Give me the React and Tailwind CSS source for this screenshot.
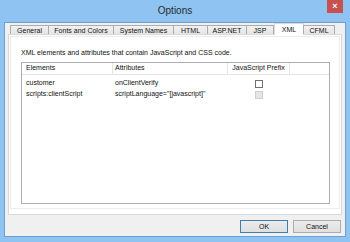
import React from 'react'

const tabs = ['General', 'Fonts and Colors', 'System Names', 'HTML', 'ASP.NET', 'JSP', 'XML', 'CFML']
const tabWidths = ['w-[39px]', 'w-[66px]', 'w-[61px]', 'w-[35px]', 'w-[40px]', 'w-[28px]', 'w-[30px]', 'w-[32px]']

const rows = [
  { el: 'customer', attr: 'onClientVerify', disabled: false },
  { el: 'scripts:clientScript', attr: 'scriptLanguage="[javascript]"', disabled: true },
]

export default function App() {
  return (
    <div
      className="w-[350px] h-[242px] bg-[#8ec3f2] flex flex-col text-[#111] overflow-hidden"
      style={{ fontFamily: '"Liberation Sans", Arial, sans-serif' }}
    >
      {/* Title bar */}
      <div className="relative h-[22px] shrink-0 flex items-center justify-center">
        <span className="text-[10px] text-[#2b2b2b] -mt-[2px]">Options</span>
        <div className="absolute right-[7px] top-0 w-[16px] h-[13px] bg-[#c75050] flex items-center justify-center">
          <span className="text-white text-[9px] font-bold leading-none">×</span>
        </div>
      </div>

      {/* Client */}
      <div className="mx-[4px] mb-[5px] flex-1 bg-[#f0f0f0] border border-[#6f9fd2] flex flex-col">
        {/* Tabs */}
        <div className="flex items-end h-[11px] ml-[5px] text-[7px] leading-none relative z-10">
          {tabs.map((t, i) =>
            t === 'XML' ? (
              <div
                key={t}
                className={`${tabWidths[i]} h-[12px] -mb-px bg-white border border-b-0 border-[#d9d9d9] flex items-center justify-center`}
              >
                {t}
              </div>
            ) : (
              <div
                key={t}
                className={`${tabWidths[i]} h-[9px] bg-gradient-to-b from-[#f2f2f2] to-[#e5e5e5] border border-b-0 border-[#acacac] -ml-px first:ml-0 flex items-center justify-center`}
              >
                {t}
              </div>
            )
          )}
        </div>

        {/* Panel */}
        <div className="ml-[3px] w-[334px] h-[181px] bg-white border border-[#d9d9d9] p-[1px]">
          <div className="h-[173px] border border-[#ececec] bg-white px-[10px] pt-[11px] text-[7px]">
            <p className="leading-[9px]">XML elements and attributes that contain JavaScript and CSS code.</p>
            <div className="mt-[5px] w-[309px] h-[142px] border border-[#abadb3] bg-white">
              <div className="flex h-[12px] border-b border-[#e5e5e5] items-center">
                <div className="w-[91px] h-full pl-[4px] flex items-center border-r border-[#e5e5e5]">Elements</div>
                <div className="w-[115px] h-full pl-[2px] flex items-center border-r border-[#e5e5e5]">Attributes</div>
                <div className="w-[62px] h-full flex items-center justify-center border-r border-[#e5e5e5]">JavaScript Prefix</div>
              </div>
              <div className="pt-[3px]">
                {rows.map((r) => (
                  <div key={r.el} className="flex h-[11px] items-center">
                    <div className="w-[91px] pl-[4px]">{r.el}</div>
                    <div className="w-[115px] pl-[2px]">{r.attr}</div>
                    <div className="w-[62px] flex justify-center">
                      <div
                        className={
                          r.disabled
                            ? 'w-[8px] h-[8px] border border-[#cfcfcf] bg-[#e6e6e6]'
                            : 'w-[8px] h-[8px] border border-[#707070] bg-white'
                        }
                      />
                    </div>
                  </div>
                ))}
              </div>
            </div>
          </div>
        </div>

        {/* Buttons */}
        <div className="flex justify-end gap-[5px] mt-[5px] mr-[4px] text-[7px]">
          <button className="w-[48px] h-[13px] border border-[#3c7fb1] bg-gradient-to-b from-[#ececec] to-[#e0e0e0] flex items-center justify-center leading-none">
            OK
          </button>
          <button className="w-[48px] h-[13px] border border-[#acacac] bg-gradient-to-b from-[#ececec] to-[#e0e0e0] flex items-center justify-center leading-none">
            Cancel
          </button>
        </div>
      </div>
    </div>
  )
}
